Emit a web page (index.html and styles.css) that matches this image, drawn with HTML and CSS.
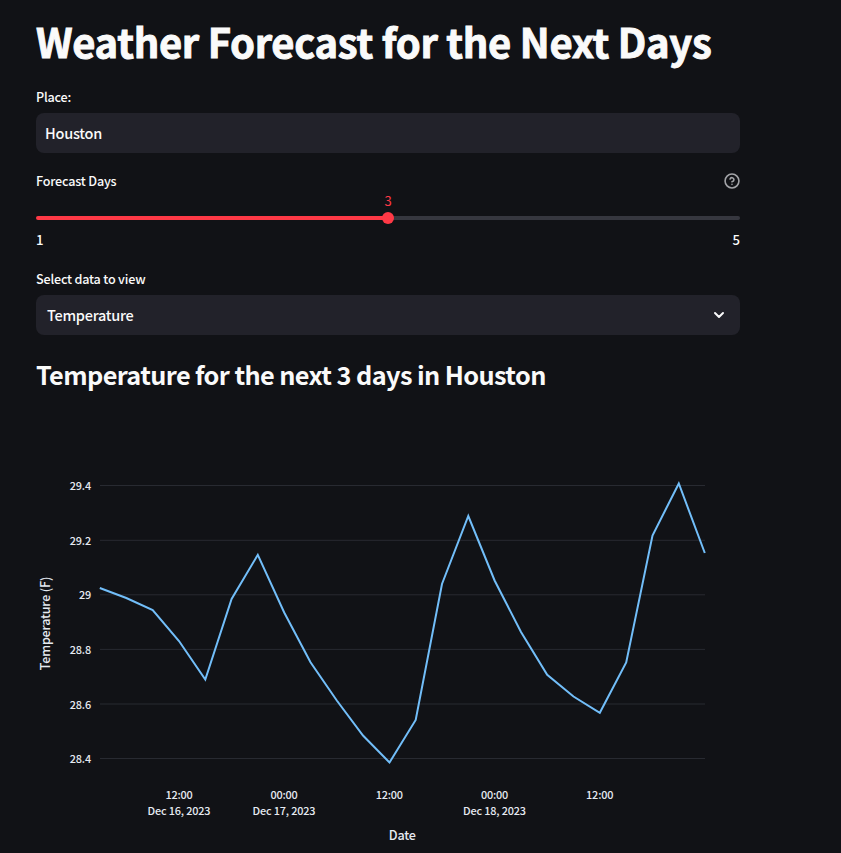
FILE: index.html
```html
<!DOCTYPE html>
<html lang="en">
<head>
<meta charset="utf-8">
<title>Weather Forecast</title>
<link rel="stylesheet" href="styles.css">
</head>
<body>
<main class="app">
  <h1 class="title"><span>Weather Forecast for the Next Days</span></h1>

  <section class="field field-place">
    <label class="label"><span>Place:</span></label>
    <div class="control control-input"><span>Houston</span></div>
  </section>

  <section class="field field-slider">
    <div class="label label-row">
      <span>Forecast Days</span>
      <svg class="help" viewBox="0 0 24 24" fill="none" stroke="currentColor" stroke-width="2.4" stroke-linecap="round" stroke-linejoin="round"><circle cx="12" cy="12" r="10.4"/><path d="M9.09 9a3 3 0 0 1 5.83 1c0 2-3 3-3 3M12 17h.01"/></svg>
    </div>
    <div class="slider-value"><span>3</span></div>
    <div class="track"><div class="thumb"></div></div>
    <div class="range"><span>1</span><span>5</span></div>
  </section>

  <section class="field field-select">
    <label class="label"><span>Select data to view</span></label>
    <div class="control control-select">
      <span>Temperature</span>
      <svg class="chevron" viewBox="0 0 12 8" fill="none" stroke="currentColor" stroke-width="2" stroke-linecap="round" stroke-linejoin="round"><path d="M2 2 6 6 10 2"/></svg>
    </div>
  </section>

  <h2 class="subtitle"><span>Temperature for the next 3 days in Houston</span></h2>

  <svg class="chart" viewBox="36 435 704 418">
    <g class="grid">
      <path d="M100 485.5H705M100 540.3H705M100 594.8H705M100 649.4H705M100 704H705M100 758.5H705"/>
    </g>
    <polyline class="series" points="99.8,588 126.3,598 152.7,610 179,641 205.3,679.5 231.6,599 257.8,554.8 284.2,612.5 310.5,662.3 336.8,700.5 363,735.5 389.5,762.5 415.7,720 442,584 468.3,516 494.6,580.5 521,632 547.2,674.8 573.5,696.5 599.8,712.8 626.2,662.5 652.5,535.5 678.8,483.5 704.8,553"/>
    <g class="tick tick-y">
      <text x="91" y="490">29.4</text>
      <text x="91" y="545">29.2</text>
      <text x="91" y="599">29</text>
      <text x="91" y="654">28.8</text>
      <text x="91" y="709">28.6</text>
      <text x="91" y="763">28.4</text>
    </g>
    <g class="tick tick-x">
      <text x="179" y="799">12:00</text>
      <text x="179" y="815">Dec 16, 2023</text>
      <text x="284" y="799">00:00</text>
      <text x="284" y="815">Dec 17, 2023</text>
      <text x="389.3" y="799">12:00</text>
      <text x="494.5" y="799">00:00</text>
      <text x="494.5" y="815">Dec 18, 2023</text>
      <text x="599.7" y="799">12:00</text>
    </g>
    <text class="axis" x="402.3" y="840">Date</text>
    <text class="axis" transform="translate(50 623.5) rotate(-90)">Temperature (F)</text>
  </svg>
</main>
</body>
</html>
```

FILE: styles.css
```css
* { box-sizing: border-box; }
html, body { margin: 0; }
body {
  height: 853px;
  overflow: hidden;
  background: #111216;
  color: #fafafa;
  font-family: "Noto Sans CJK SC", "Noto Sans", sans-serif;
  font-weight: 500;
}
.app {
  display: flex;
  flex-direction: column;
  width: 740px;
  height: 853px;
  padding: 14px 0 0 36px;
}
.title {
  height: 75px;
  margin: 0;
  font-size: 40px;
  line-height: 54px;
  font-weight: 700;
  letter-spacing: -0.33px;
  -webkit-text-stroke: 0.9px #fafafa;
  white-space: nowrap;
}
.label {
  display: block;
  height: 24px;
  font-size: 12.6px;
  line-height: 16px;
  letter-spacing: -0.19px;
}
.label-row {
  display: flex;
  justify-content: space-between;
}
.help { width: 16px; height: 16px; color: #a3a4a8; }
.control {
  display: flex;
  align-items: center;
  justify-content: space-between;
  height: 40px;
  border-radius: 8px;
  background: #22222a;
  font-size: 14.5px;
  line-height: 38px;
  letter-spacing: -0.25px;
}
.control-input { padding-left: 9px; }
.control-select { padding: 0 15px 0 11px; }
.chevron { width: 12px; height: 8px; }
.field-place { height: 84px; }
.field-slider { height: 98px; }
.field-slider .label { height: 20px; }
.slider-value {
  height: 23px;
  text-align: center;
  font-size: 13px;
  line-height: 16px;
  font-weight: 400;
  color: #ff3946;
}
.track {
  display: flex;
  align-items: center;
  justify-content: center;
  height: 4px;
  border-radius: 4px;
  background: linear-gradient(to right, #ff3946 50%, #36373f 50%);
}
.thumb { flex: none; width: 12px; height: 12px; border-radius: 50%; background: #ff3946; }
.range {
  display: flex;
  justify-content: space-between;
  margin-top: 12px;
  font-size: 13.2px;
  line-height: 16px;
}
.field-select { height: 64px; }
.subtitle {
  height: 100px;
  margin: 0;
  padding-top: 11px;
  font-size: 25.3px;
  line-height: 56px;
  font-weight: 600;
  letter-spacing: -0.61px;
  white-space: nowrap;
}
.field, .title, .subtitle, .chart { flex: none; }
.chart { display: block; width: 704px; height: 418px; }
.grid { stroke: #282a31; stroke-width: 1; }
.series { fill: none; stroke: #72bef9; stroke-width: 2; }
.tick { font-size: 10.9px; fill: #e6eaf1; letter-spacing: -0.17px; }
.tick-y { text-anchor: end; }
.tick-x { text-anchor: middle; }
.axis { font-size: 12.6px; fill: #e6eaf1; text-anchor: middle; letter-spacing: -0.2px; }
```
